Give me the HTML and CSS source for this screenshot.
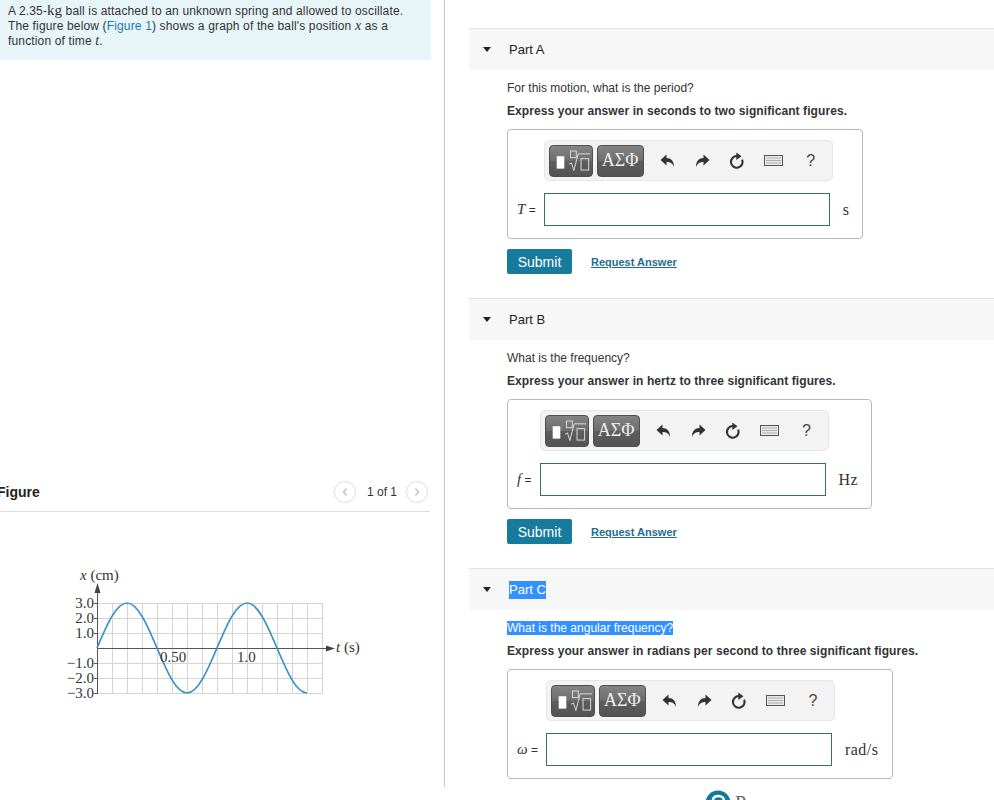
FILE: index.html
```html
<!DOCTYPE html>
<html>
<head>
<meta charset="utf-8">
<title>Part A</title>
<link rel="stylesheet" href="styles.css">
</head>
<body>
<div class="page">
  <aside class="left">
    <div class="intro">A 2.35-<span class="mj">kg</span> ball is attached to an unknown spring and allowed to oscillate. The figure below (<a class="link">Figure 1</a>) shows a graph of the ball's position <i class="mi">x</i> as a function of time <i class="mi">t</i>.</div>
    <div class="fig-head">
      <span class="fig-title">Figure</span>
      <div class="pager">
        <span class="circ"><svg width="8" height="10" viewBox="0 0 8 10"><polyline points="5.5,1.5 2.5,5 5.5,8.5" fill="none" stroke="#bdbdbd" stroke-width="1.2"/></svg></span>
        <span class="count">1 of 1</span>
        <span class="circ"><svg width="8" height="10" viewBox="0 0 8 10"><polyline points="2.5,1.5 5.5,5 2.5,8.5" fill="none" stroke="#bdbdbd" stroke-width="1.2"/></svg></span>
      </div>
    </div>
    <svg class="graph" width="310" height="145" viewBox="0 0 310 145">
      <g stroke="#d4d4d4" stroke-width="1" fill="none">
        <path d="M52.5 43V133M67.5 43V133M82.5 43V133M97.5 43V133M112.5 43V133M127.5 43V133M142.5 43V133M157.5 43V133M172.5 43V133M187.5 43V133M202.5 43V133M217.5 43V133M232.5 43V133M247.5 43V133M262.5 43V133"/>
        <path d="M37 43.5H263M37 58.5H263M37 73.5H263M37 103.5H263M37 118.5H263M37 133.5H263"/>
      </g>
      <g stroke="#555" stroke-width="1" fill="none">
        <path d="M37.5 30V134"/>
        <path d="M37 88.5H268"/>
        <path d="M34 43.5H37M34 58.5H37M34 73.5H37M34 103.5H37M34 118.5H37M34 133.5H37"/>
      </g>
      <polygon points="37.5,23 34.5,33 40.5,33" fill="#444"/>
      <polygon points="275,88.5 266,85.5 266,91.5" fill="#444"/>
      <path d="M37 88 C46.78 64.95 56.14 43 67 43 S87.22 64.95 97 88 S116.14 133 127 133 S147.22 111.05 157 88 S176.14 43 187 43 S207.22 64.95 217 88 S236.14 133 247 133" fill="none" stroke="#3592c8" stroke-width="1.7"/>
      <g font-family="Liberation Serif, serif" font-size="15" fill="#333">
        <text x="20" y="20"><tspan font-style="italic">x</tspan> (cm)</text>
        <text x="34" y="48" text-anchor="end">3.0</text>
        <text x="34" y="63" text-anchor="end">2.0</text>
        <text x="34" y="78" text-anchor="end">1.0</text>
        <text x="34" y="108" text-anchor="end">−1.0</text>
        <text x="34" y="123" text-anchor="end">−2.0</text>
        <text x="34" y="138" text-anchor="end">−3.0</text>
        <text x="100" y="102">0.50</text>
        <text x="177" y="102">1.0</text>
        <text x="276" y="92"><tspan font-style="italic">t</tspan> (s)</text>
      </g>
    </svg>
  </aside>

  <main class="right">
    <section class="part">
      <div class="part-head"><span class="caret"></span><span class="part-title">Part A</span></div>
      <div class="part-body">
        <p class="q">For this motion, what is the period?</p>
        <p class="instr">Express your answer in seconds to two significant figures.</p>
        <div class="answer">
          <div class="toolbar">
            <span class="tb-btn tpl"><svg width="44" height="32" viewBox="0 0 44 32"><rect x="7" y="11" width="8" height="13" fill="#fff"/><rect x="21.5" y="5.5" width="6" height="7" fill="none" stroke="#ddd"/><path d="M20 19.5L22.5 18L25 26L29.5 8.5H42" fill="none" stroke="#ddd" stroke-width="1"/><rect x="32.5" y="13.5" width="8" height="12" fill="none" stroke="#ddd"/></svg></span>
            <span class="tb-btn greek">ΑΣΦ</span>
            <span class="tb-ico w34"><svg width="16" height="15" viewBox="0 0 16 14"><path d="M6.5 1L0.5 6.5L6.5 12V8.5C10 8.5 12.5 9.6 14 13.5C14 7.5 11 4.5 6.5 4.5Z" fill="#333"/></svg></span>
            <span class="tb-ico w34"><svg width="16" height="15" viewBox="0 0 16 14"><path d="M9.5 1L15.5 6.5L9.5 12V8.5C6 8.5 3.5 9.6 2 13.5C2 7.5 5 4.5 9.5 4.5Z" fill="#333"/></svg></span>
            <span class="tb-ico w37"><svg width="18" height="18" viewBox="0 0 16 16"><path d="M12.6 6.8A5.2 5.2 0 1 1 8 3.6" fill="none" stroke="#333" stroke-width="1.9"/><polygon points="7.4,0.4 12,3.8 7.4,7" fill="#333"/></svg></span>
            <span class="tb-ico w36"><svg width="19" height="11" viewBox="0 0 19 11"><rect x="0.5" y="0.5" width="18" height="10" fill="#e9e9e9" stroke="#555"/><path d="M2.5 3H17M2.5 5.5H17M2.5 8H17" stroke="#777" stroke-width="1" stroke-dasharray="1 1"/></svg></span>
            <span class="tb-ico w38 help">?</span>
          </div>
          <label class="var"><i class="mi-v">T</i> =</label>
          <div class="input"></div>
          <span class="unit">s</span>
        </div>
        <div class="actions"><button class="submit">Submit</button><a class="req">Request Answer</a></div>
      </div>
    </section>

    <section class="part">
      <div class="part-head"><span class="caret"></span><span class="part-title">Part B</span></div>
      <div class="part-body">
        <p class="q">What is the frequency?</p>
        <p class="instr">Express your answer in hertz to three significant figures.</p>
        <div class="answer">
          <div class="toolbar">
            <span class="tb-btn tpl"><svg width="44" height="32" viewBox="0 0 44 32"><rect x="7" y="11" width="8" height="13" fill="#fff"/><rect x="21.5" y="5.5" width="6" height="7" fill="none" stroke="#ddd"/><path d="M20 19.5L22.5 18L25 26L29.5 8.5H42" fill="none" stroke="#ddd" stroke-width="1"/><rect x="32.5" y="13.5" width="8" height="12" fill="none" stroke="#ddd"/></svg></span>
            <span class="tb-btn greek">ΑΣΦ</span>
            <span class="tb-ico w34"><svg width="16" height="15" viewBox="0 0 16 14"><path d="M6.5 1L0.5 6.5L6.5 12V8.5C10 8.5 12.5 9.6 14 13.5C14 7.5 11 4.5 6.5 4.5Z" fill="#333"/></svg></span>
            <span class="tb-ico w34"><svg width="16" height="15" viewBox="0 0 16 14"><path d="M9.5 1L15.5 6.5L9.5 12V8.5C6 8.5 3.5 9.6 2 13.5C2 7.5 5 4.5 9.5 4.5Z" fill="#333"/></svg></span>
            <span class="tb-ico w37"><svg width="18" height="18" viewBox="0 0 16 16"><path d="M12.6 6.8A5.2 5.2 0 1 1 8 3.6" fill="none" stroke="#333" stroke-width="1.9"/><polygon points="7.4,0.4 12,3.8 7.4,7" fill="#333"/></svg></span>
            <span class="tb-ico w36"><svg width="19" height="11" viewBox="0 0 19 11"><rect x="0.5" y="0.5" width="18" height="10" fill="#e9e9e9" stroke="#555"/><path d="M2.5 3H17M2.5 5.5H17M2.5 8H17" stroke="#777" stroke-width="1" stroke-dasharray="1 1"/></svg></span>
            <span class="tb-ico w38 help">?</span>
          </div>
          <label class="var"><i class="mi-v">f</i> =</label>
          <div class="input"></div>
          <span class="unit">Hz</span>
        </div>
        <div class="actions"><button class="submit">Submit</button><a class="req">Request Answer</a></div>
      </div>
    </section>

    <section class="part">
      <div class="part-head"><span class="caret"></span><span class="part-title sel">Part C</span></div>
      <div class="part-body">
        <p class="q"><span class="sel">What is the angular frequency?</span></p>
        <p class="instr">Express your answer in radians per second to three significant figures.</p>
        <div class="answer">
          <div class="toolbar">
            <span class="tb-btn tpl"><svg width="44" height="32" viewBox="0 0 44 32"><rect x="7" y="11" width="8" height="13" fill="#fff"/><rect x="21.5" y="5.5" width="6" height="7" fill="none" stroke="#ddd"/><path d="M20 19.5L22.5 18L25 26L29.5 8.5H42" fill="none" stroke="#ddd" stroke-width="1"/><rect x="32.5" y="13.5" width="8" height="12" fill="none" stroke="#ddd"/></svg></span>
            <span class="tb-btn greek">ΑΣΦ</span>
            <span class="tb-ico w34"><svg width="16" height="15" viewBox="0 0 16 14"><path d="M6.5 1L0.5 6.5L6.5 12V8.5C10 8.5 12.5 9.6 14 13.5C14 7.5 11 4.5 6.5 4.5Z" fill="#333"/></svg></span>
            <span class="tb-ico w34"><svg width="16" height="15" viewBox="0 0 16 14"><path d="M9.5 1L15.5 6.5L9.5 12V8.5C6 8.5 3.5 9.6 2 13.5C2 7.5 5 4.5 9.5 4.5Z" fill="#333"/></svg></span>
            <span class="tb-ico w37"><svg width="18" height="18" viewBox="0 0 16 16"><path d="M12.6 6.8A5.2 5.2 0 1 1 8 3.6" fill="none" stroke="#333" stroke-width="1.9"/><polygon points="7.4,0.4 12,3.8 7.4,7" fill="#333"/></svg></span>
            <span class="tb-ico w36"><svg width="19" height="11" viewBox="0 0 19 11"><rect x="0.5" y="0.5" width="18" height="10" fill="#e9e9e9" stroke="#555"/><path d="M2.5 3H17M2.5 5.5H17M2.5 8H17" stroke="#777" stroke-width="1" stroke-dasharray="1 1"/></svg></span>
            <span class="tb-ico w38 help">?</span>
          </div>
          <label class="var"><i class="mi-v">ω</i> =</label>
          <div class="input"></div>
          <span class="unit">rad/s</span>
        </div>
        <div class="actions"><button class="submit">Submit</button><a class="req">Request Answer</a></div>
      </div>
    </section>
  </main>
</div>
<footer class="footer">
  <svg class="logo" width="26" height="26" viewBox="0 0 26 26"><circle cx="13" cy="13" r="12.5" fill="#0f7a9e"/><path d="M8 20V10.5C8 7.5 10.5 6 13.5 6C16.8 6 19 8 19 11C19 14 16.8 16 13.5 16H11.5" fill="none" stroke="#fff" stroke-width="2.6"/></svg>
  <span class="brand">Pearson</span>
</footer>
</body>
</html>
```

FILE: styles.css
```css
html, body {
  margin: 0;
  padding: 0;
}

body {
  font-family: "Liberation Sans", Arial, sans-serif;
  font-size: 12px;
  color: #333;
  background: #fff;
}

.page {
  display: flex;
  height: 787px;
  overflow: hidden;
}

/* ---------- left column ---------- */
.left {
  width: 444px;
  flex: none;
  border-right: 1px solid #c5cacd;
}

.intro {
  width: 431px;
  height: 60px;
  box-sizing: border-box;
  background: #e7f4f8;
  padding: 3px 20px 0 8px;
  line-height: 15px;
  letter-spacing: 0.15px;
  color: #333;
}

.mj {
  font-family: "Liberation Serif", serif;
  font-size: 15px;
  line-height: 14px;
  letter-spacing: 0;
}

.mi {
  font-family: "Liberation Serif", serif;
  font-style: italic;
  font-size: 14px;
  line-height: 14px;
}

.link {
  color: #1b7ca6;
  text-decoration: none;
}

.fig-head {
  margin-top: 413px;
  width: 430px;
  height: 38px;
  border-bottom: 1px solid #dcdcdc;
  display: flex;
  align-items: center;
}

.fig-title {
  font-weight: bold;
  font-size: 14px;
  margin-left: -3px;
  color: #222;
}

.pager {
  margin-left: auto;
  margin-right: 2px;
  display: flex;
  align-items: center;
}

.circ {
  width: 20px;
  height: 20px;
  border: 1px solid #dedede;
  border-radius: 50%;
  display: flex;
  align-items: center;
  justify-content: center;
}

.count {
  margin: 0 9px 0 11px;
  color: #333;
}

.graph {
  display: block;
  margin: 48px 0 0 60px;
}

/* ---------- right column ---------- */
.right {
  flex: 1;
  min-width: 0;
  padding: 28px 0 0 24px;
}

.part {
  margin-bottom: 24px;
}

.part-head {
  height: 41px;
  border-top: 1px solid #e3e3e3;
  background: #f7f7f7;
  display: flex;
  align-items: center;
}

.caret {
  width: 0;
  height: 0;
  border-left: 4px solid transparent;
  border-right: 4px solid transparent;
  border-top: 5px solid #222;
  margin-left: 14px;
  margin-right: 18px;
}

.part-title {
  font-size: 13px;
  color: #222;
  line-height: 18px;
}

.part-body {
  padding-left: 38px;
}

.q {
  margin: 10px 0 0;
  line-height: 16px;
  color: #333;
}

.instr {
  margin: 7px 0 0;
  line-height: 16px;
  font-weight: bold;
  letter-spacing: 0.08px;
  color: #333;
}

.sel {
  background: #3390ff;
  color: #fff;
}

.answer {
  display: grid;
  width: max-content;
  grid-template-columns: auto 286px auto;
  align-items: center;
  row-gap: 12px;
  margin-top: 10px;
  border: 1px solid #b9b9b9;
  border-radius: 4px;
  padding: 10px 13px 12px 9px;
}

.toolbar {
  grid-column: 2 / 4;
  justify-self: start;
  width: 289px;
  height: 41px;
  box-sizing: border-box;
  display: flex;
  align-items: center;
  padding-left: 4px;
  background: #f3f3f3;
  border: 1px solid #e6e6e6;
  border-radius: 5px;
}

.tb-btn {
  display: flex;
  align-items: center;
  justify-content: center;
  height: 32px;
  box-sizing: border-box;
  border: 1px solid #4f4f4f;
  border-radius: 4px;
  background: linear-gradient(#848484 0%, #6c6c6c 50%, #5d5d5d 51%, #545454 100%);
}

.tpl {
  width: 44px;
}

.greek {
  width: 47px;
  margin-left: 4px;
  font-family: "Liberation Serif", serif;
  font-size: 18px;
  color: #eee;
}

.tb-ico {
  display: flex;
  align-items: center;
  justify-content: center;
  height: 32px;
}

.w34 { width: 34px; }
.w36 { width: 36px; }
.w37 { width: 37px; }
.w38 { width: 38px; }

.greek + .tb-ico {
  margin-left: 7px;
}

.help {
  font-size: 16px;
  color: #444;
}

.var {
  margin-right: 8px;
  white-space: nowrap;
  font-size: 12px;
  color: #333;
}

.mi-v {
  font-family: "Liberation Serif", serif;
  font-size: 15px;
  font-style: italic;
}

.input {
  height: 33px;
  box-sizing: border-box;
  border: 1px solid #356d72;
  background: #fff;
}

.unit {
  margin-left: 13px;
  font-family: "Liberation Serif", serif;
  font-size: 16px;
  letter-spacing: 0.5px;
  color: #333;
}

.actions {
  display: flex;
  align-items: center;
  margin-top: 10px;
}

.submit {
  width: 65px;
  height: 25px;
  padding: 0;
  border: 0;
  border-radius: 2px;
  background: #167b9c;
  color: #fff;
  font-family: "Liberation Sans", Arial, sans-serif;
  font-size: 14px;
}

.req {
  margin-left: 19px;
  font-size: 11px;
  font-weight: bold;
  color: #1e6e8e;
  text-decoration: underline;
}

/* ---------- footer ---------- */
.footer {
  height: 13px;
  overflow: hidden;
  display: flex;
  align-items: flex-start;
  padding-left: 705px;
}

.logo {
  display: block;
  margin-top: 3px;
  flex: none;
}

.brand {
  margin: 6px 0 0 4px;
  font-family: "Liberation Serif", serif;
  font-size: 20px;
  line-height: 20px;
  color: #666;
}
```
